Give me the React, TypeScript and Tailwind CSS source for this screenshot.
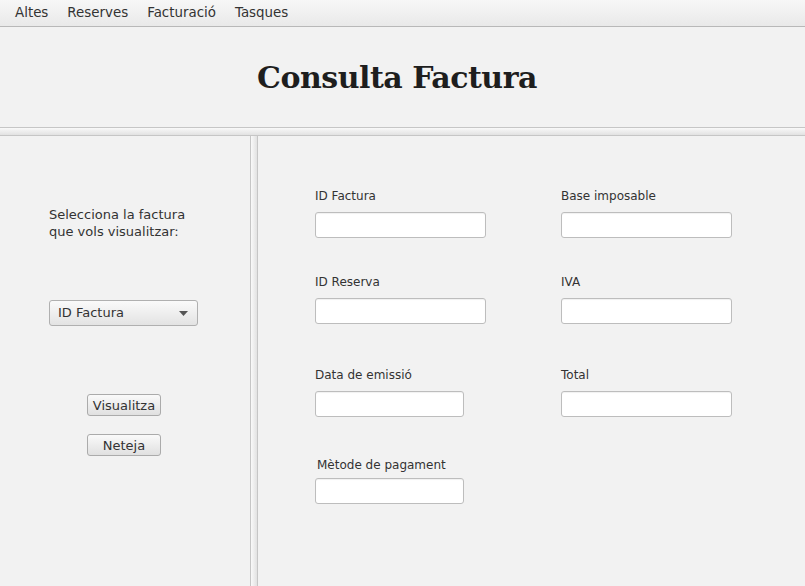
import React from 'react';

const menus = ['Altes', 'Reserves', 'Facturació', 'Tasques'];

const Field = ({ label, width, mt, labelMt, indent }: { label: string; width: string; mt: string; labelMt?: string; indent?: boolean }) => (
  <div className={`flex flex-col ${mt}`}>
    <span className={`text-[12px] leading-[16px] text-[#333] ${indent ? 'pl-[2px]' : ''}`}>{label}</span>
    <div className={`${labelMt ?? 'mt-[8px]'} ${width} h-[26px] bg-white border border-[#bdbdbd] rounded-[3px] shadow-[inset_0_1px_1px_rgba(0,0,0,0.06)]`} />
  </div>
);

const Button = ({ children, mt }: { children: React.ReactNode; mt: string }) => (
  <button className={`${mt} w-[74px] h-[22px] border border-[#ababab] rounded-[3px] bg-gradient-to-b from-[#fafafa] to-[#e0e0e0] text-[13px] text-[#333] leading-none`}>
    {children}
  </button>
);

export default function App() {
  return (
    <div className="w-[805px] h-[586px] bg-[#f2f2f2] flex flex-col overflow-hidden" style={{ fontFamily: '"DejaVu Sans", sans-serif' }}>
      {/* menu bar */}
      <div className="h-[27px] flex items-center pl-[7px] pt-[1px] gap-[3px] bg-gradient-to-b from-[#f7f7f7] to-[#e9e9e9] border-b border-[#b8b8b8] text-[13.4px] text-[#333]">
        {menus.map((m) => (
          <span key={m} className="px-[8px]">{m}</span>
        ))}
      </div>

      {/* header */}
      <div className="h-[100px] flex items-center justify-center pr-[11px]">
        <h1 className="text-[30px] tracking-[-0.5px] font-bold text-[#1e1e1e]" style={{ fontFamily: '"DejaVu Serif", serif' }}>Consulta Factura</h1>
      </div>

      {/* horizontal divider */}
      <div className="h-[9px] border-t border-b border-[#c6c6c6] bg-gradient-to-b from-[#f9f9f9] to-[#e2e2e2]" />

      <div className="flex-1 flex">
        {/* left pane */}
        <div className="w-[250px] flex flex-col">
          <p className="ml-[49px] mt-[70px] text-[13px] leading-[17px] text-[#333]">
            Selecciona la factura<br />que vols visualitzar:
          </p>
          <div className="ml-[49px] mt-[60px] w-[149px] h-[26px] border border-[#b0b0b0] rounded-[3px] bg-gradient-to-b from-[#fafafa] to-[#e3e3e3] flex items-center justify-between pl-[8px] pr-[9px] text-[13px] text-[#333]">
            <span>ID Factura</span>
            <svg width="9" height="5" viewBox="0 0 9 5"><path d="M0 0h9L4.5 5z" fill="#555" /></svg>
          </div>
          <div className="flex flex-col items-center pr-[2px]">
            <Button mt="mt-[68px]">Visualitza</Button>
            <Button mt="mt-[18px]">Neteja</Button>
          </div>
        </div>

        {/* vertical divider */}
        <div className="w-[8px] border-l border-r border-[#c6c6c6] bg-gradient-to-r from-[#f9f9f9] to-[#e2e2e2]" />

        {/* right pane */}
        <div className="flex-1 pl-[57px] pt-[52px] grid grid-cols-[246px_171px] content-start">
          <Field label="ID Factura" width="w-[171px]" mt="mt-0" />
          <Field label="Base imposable" width="w-[171px]" mt="mt-0" />
          <Field label="ID Reserva" width="w-[171px]" mt="mt-[36px]" />
          <Field label="IVA" width="w-[171px]" mt="mt-[36px]" />
          <Field label="Data de emissió" width="w-[149px]" mt="mt-[43px]" />
          <Field label="Total" width="w-[171px]" mt="mt-[43px]" />
          <Field label="Mètode de pagament" width="w-[149px]" mt="mt-[40px]" labelMt="mt-[5px]" indent />
        </div>
      </div>
    </div>
  );
}
